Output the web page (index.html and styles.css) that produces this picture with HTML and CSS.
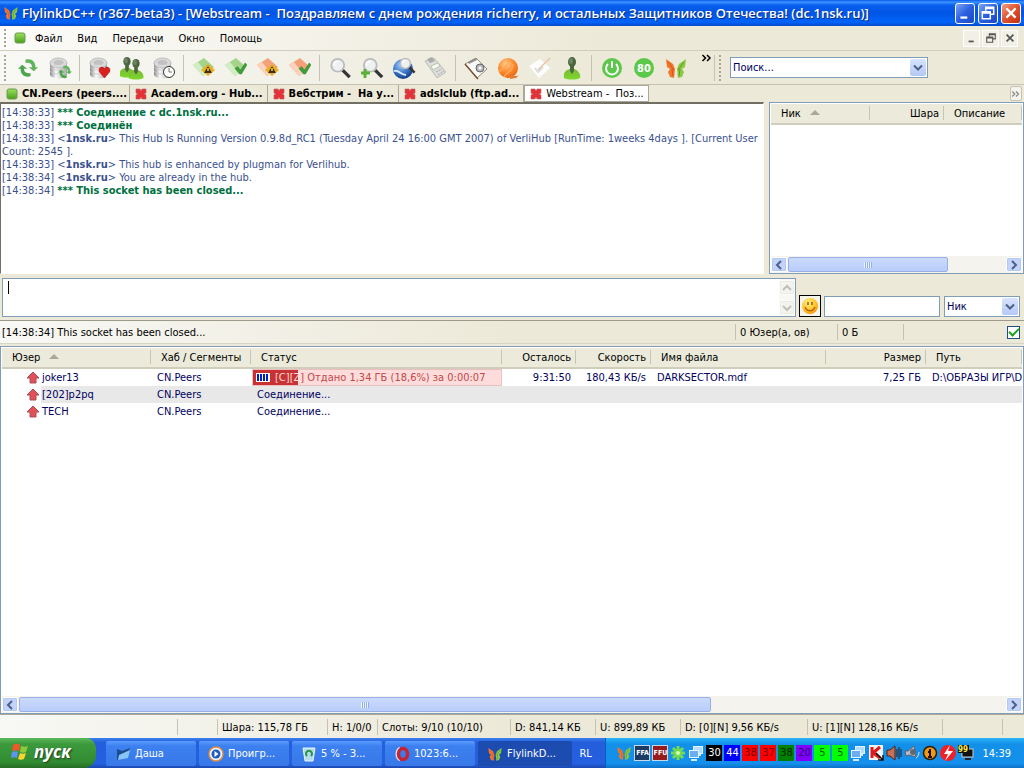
FILE: index.html
```
<!DOCTYPE html>
<html lang="ru">
<head>
<meta charset="UTF-8">
<meta name="viewport" content="width=device-width, initial-scale=1.0">
<title>FlylinkDC++</title>
<link rel="stylesheet" href="styles.css">
</head>
<body>
<!-- icon sprite -->
<svg class="sprite" aria-hidden="true">
    <defs>
        <linearGradient id="gGreen" x1="0" y1="0" x2="0" y2="1"><stop offset="0" stop-color="#9be05a"/><stop offset="1" stop-color="#4a9e1e"/></linearGradient>
        <linearGradient id="gMetal" x1="0" y1="0" x2="1" y2="0"><stop offset="0" stop-color="#8a8a8a"/><stop offset=".35" stop-color="#fafafa"/><stop offset="1" stop-color="#a4a4a4"/></linearGradient>
        <linearGradient id="gLeaf" x1="0" y1="0" x2="0" y2="1"><stop offset="0" stop-color="#7cb83c"/><stop offset="1" stop-color="#7cd828"/></linearGradient>
        <radialGradient id="gBlue" cx=".4" cy=".3" r=".8"><stop offset="0" stop-color="#a8d0f8"/><stop offset=".5" stop-color="#3a78c8"/><stop offset="1" stop-color="#0c2c70"/></radialGradient>
        <radialGradient id="gOrange" cx=".4" cy=".3" r=".8"><stop offset="0" stop-color="#ffd090"/><stop offset=".5" stop-color="#ff8a30"/><stop offset="1" stop-color="#e85c08"/></radialGradient>
        <radialGradient id="gSmile" cx=".4" cy=".3" r=".8"><stop offset="0" stop-color="#fff08a"/><stop offset=".6" stop-color="#ffc420"/><stop offset="1" stop-color="#f08a00"/></radialGradient>
        <symbol id="butterfly" viewBox="0 0 24 24">
            <path d="M11 13L9 8 2 3l1 8 3 2-2 3 2 5 4 1z" fill="#f2762c"/>
            <path d="M13 13l2-5 7-5-1 8-3 2 2 3-2 5-4 1z" fill="#8cc840"/>
            <path d="M4 6l6 8M8 13l1 7" stroke="#d4541c"/>
            <path d="M20 6l-6 8M16 13l-1 7" stroke="#5c9c28"/>
        </symbol>
        <symbol id="on" viewBox="0 0 12 12"><rect x="1" y="1" width="10" height="10" rx="2" fill="url(#gGreen)" stroke="#6a9a50"/></symbol>
        <symbol id="off" viewBox="0 0 12 12"><path d="M1 1h4l1 2 1-2h4v4L9 6l2 1v4H7L6 9l-1 2H1V7l2-1-2-1z" fill="#e43238" stroke="#b85a5c" stroke-width=".6"/></symbol>
        <symbol id="disk" viewBox="0 0 24 24">
            <path d="M2 7v12c2 4 15 5 17 0V7z" fill="url(#gMetal)"/>
            <path d="M2 11c2 4 15 4 17 0M2 15c2 4 15 4 17 0" fill="none" stroke="#c4c4c4" stroke-width=".8"/>
            <ellipse cx="10.500" cy="7" rx="8.500" ry="5" fill="#dadada" stroke="#b4b4b4" stroke-width=".8"/>
            <ellipse cx="10.500" cy="6.500" rx="5" ry="2.500" fill="#c2c2c2"/>
        </symbol>
        <symbol id="cycle" viewBox="0 0 24 24">
            <path d="M9 2c7-2 12 2 12 9h3l-5 5-6-5h4c0-4-3-6-8-5z" fill="#62b45c"/>
            <path d="M15 22c-7 2-12-2-12-9H0l5-5 6 5H7c0 4 3 6 8 5z" fill="#4ca44c"/>
        </symbol>
        <symbol id="heart" viewBox="0 0 12 12"><path d="M6 12L1 6C-1 2 4-1 6 3c2-4 7-1 5 3z" fill="#dc2020" stroke="#a81010" stroke-width=".5"/></symbol>
        <symbol id="check" viewBox="0 0 14 14"><path d="M1 7l3-2 3 4 5-8 2 2-6 10H6z" fill="#3fa03a" stroke="#2a742a" stroke-width=".5"/></symbol>
        <symbol id="warn" viewBox="0 0 14 12"><path d="M7 0l7 6-7 6-7-6z" fill="#e8b020"/><path d="M7 2l4 7H3z" fill="#403000"/><path d="M7 4v3" stroke="#ffd040" stroke-width="1.500"/></symbol>
        <symbol id="sheetGreen" viewBox="0 0 24 24"><path d="M1 9L12 2l10 9-11 9z" fill="#a4d48a"/><path d="M1 9l5-3 9 11-4 3z" fill="#d2ecc4"/></symbol>
        <symbol id="sheetRed" viewBox="0 0 24 24"><path d="M1 9L12 2l10 9-11 9z" fill="#f4a078"/><path d="M1 9l5-3 9 11-4 3z" fill="#fbd2bc"/></symbol>
        <symbol id="lens" viewBox="0 0 24 24">
            <path d="M14 14l8 8" stroke="#333" stroke-width="3.500"/>
            <circle cx="9" cy="9" r="7" fill="#eef0f2" stroke="#bcbcbc" stroke-width="2"/>
            <path d="M5 9c0-3 2-4 4-4" fill="none" stroke="#fff" stroke-width="2"/>
        </symbol>
        <symbol id="person" viewBox="0 0 24 24">
            <path d="M4 22c-1-6 2-8 6-9h4c4 1 7 5 6 9-4 2-12 2-16 0z" fill="url(#gLeaf)"/>
            <path d="M10 10h4v5l-2 3-2-3z" fill="#4a6a3a"/>
            <ellipse cx="12" cy="6" rx="4" ry="5" fill="#4c6440"/>
            <ellipse cx="11" cy="5" rx="2" ry="3" fill="#6c8460"/>
        </symbol>
        <symbol id="flag" viewBox="0 0 20 18">
            <path d="M3 2c3-2 5-1 7 0L9 8C7 7 5 7 2 8z" fill="#f0582c"/><path d="M11 3c3 1 5 1 7 0l-2 6c-2 1-4 1-6 0z" fill="#8ccc3c"/>
            <path d="M2 9c2-1 5-1 6 0l-1 6c-2-1-4-1-6 0z" fill="#5c94f0"/><path d="M10 10c2 1 4 1 6 0l-2 6c-2 1-4 1-6 0z" fill="#fcd430"/>
        </symbol>
        <symbol id="arrowUp" viewBox="0 0 14 14"><path d="M7 1l6 6h-3v5H4V7H1z" fill="#e25058" stroke="#a85058"/></symbol>
        <symbol id="down" viewBox="0 0 10 10"><path d="M1 3l4 4 4-4" fill="none" stroke="#4d6185" stroke-width="2"/></symbol>
        <symbol id="up" viewBox="0 0 10 10"><path d="M1 7l4-4 4 4" fill="none" stroke="#4d6185" stroke-width="2"/></symbol>
        <symbol id="left" viewBox="0 0 10 10"><path d="M7 1L3 5l4 4" fill="none" stroke="#4d6185" stroke-width="2"/></symbol>
        <symbol id="right" viewBox="0 0 10 10"><path d="M3 1l4 4-4 4" fill="none" stroke="#4d6185" stroke-width="2"/></symbol>
        <symbol id="more" viewBox="0 0 8 8"><path d="M1 2l2 2-2 2M4 2l2 2-2 2" fill="none" stroke="currentColor"/></symbol>
        <symbol id="min" viewBox="0 0 14 14"><path d="M3 10h6v2H3z" fill="currentColor"/></symbol>
        <symbol id="restore" viewBox="0 0 14 14"><path d="M5 5V2h7v6h-3M5 3h7M2 6h7v6H2zM2 7h7" fill="none" stroke="currentColor" stroke-width="1.300"/></symbol>
        <symbol id="cross" viewBox="0 0 14 14"><path d="M3 3l8 8M11 3l-8 8" stroke="currentColor" stroke-width="2"/></symbol>
        <symbol id="net" viewBox="0 0 16 16"><rect x="5.500" y="1.500" width="9" height="7" fill="#b4dcfc" stroke="#e4f4ff"/><path d="M8 10h5" stroke="#d0e8fc" stroke-width="2"/><rect x="1.500" y="5.500" width="9" height="7" fill="#6cacf0" stroke="#e4f4ff"/><path d="M3 15h6" stroke="#d0e8fc" stroke-width="2"/></symbol>
    </defs>
</svg>

<header class="titlebar">
    <svg class="icon16"><use href="#butterfly"/></svg>
    <h1>FlylinkDC++ (r367-beta3) - [Webstream -&nbsp; Поздравляем с днем рождения richerry, и остальных Защитников Отечества! (dc.1nsk.ru)]</h1>
    <button class="win-btn" aria-label="Свернуть"><svg><use href="#min"/></svg></button>
    <button class="win-btn" aria-label="Восстановить"><svg><use href="#restore"/></svg></button>
    <button class="win-btn win-close" aria-label="Закрыть"><svg><use href="#cross"/></svg></button>
</header>

<nav class="menubar">
    <span class="grip"></span>
    <svg class="icon12"><use href="#on"/></svg>
    <button class="menu">Файл</button>
    <button class="menu">Вид</button>
    <button class="menu">Передачи</button>
    <button class="menu">Окно</button>
    <button class="menu">Помощь</button>
    <span class="fill"></span>
    <button class="mdi-btn" aria-label="Свернуть окно"><svg><use href="#min"/></svg></button>
    <button class="mdi-btn" aria-label="Восстановить окно"><svg><use href="#restore"/></svg></button>
    <button class="mdi-btn" aria-label="Закрыть окно"><svg><use href="#cross"/></svg></button>
</nav>

<div class="toolbar">
    <span class="grip"></span>
    <button class="tool" aria-label="Переподключить"><svg viewBox="0 0 24 24"><use href="#cycle" x="2" y="2" width="20" height="20"/></svg></button>
    <button class="tool" aria-label="Обновить хаб"><svg viewBox="0 0 24 24"><use href="#disk" width="24" height="24"/><use href="#cycle" x="10" y="9" width="14" height="14"/></svg></button>
    <span class="sep"></span>
    <button class="tool" aria-label="Избранные хабы"><svg viewBox="0 0 24 24"><use href="#disk" width="24" height="24"/><use href="#heart" x="10" y="10" width="13" height="12"/></svg></button>
    <button class="tool" aria-label="Избранные пользователи"><svg viewBox="0 0 24 24"><use href="#person" x="-4" y="-1" width="22" height="24"/><use href="#person" x="5" y="1" width="22" height="24"/></svg></button>
    <button class="tool" aria-label="Последние хабы"><svg viewBox="0 0 24 24"><use href="#disk" width="24" height="24"/><circle cx="17" cy="16" r="5.500" fill="#fff" stroke="#333"/><path d="M17 12v4h3" fill="none" stroke="#777"/></svg></button>
    <span class="sep"></span>
    <button class="tool" aria-label="Очередь"><svg viewBox="0 0 24 24"><use href="#sheetGreen" width="24" height="24"/><use href="#warn" x="9" y="8" width="14" height="12"/></svg></button>
    <button class="tool" aria-label="Скачанные"><svg viewBox="0 0 24 24"><use href="#sheetGreen" width="24" height="24"/><use href="#check" x="10" y="6" width="13" height="13"/></svg></button>
    <button class="tool" aria-label="Очередь отдачи"><svg viewBox="0 0 24 24"><use href="#sheetRed" width="24" height="24"/><use href="#warn" x="9" y="8" width="14" height="12"/></svg></button>
    <button class="tool" aria-label="Отданные"><svg viewBox="0 0 24 24"><use href="#sheetRed" width="24" height="24"/><use href="#check" x="10" y="6" width="13" height="13"/></svg></button>
    <span class="sep"></span>
    <button class="tool" aria-label="Поиск"><svg viewBox="0 0 24 24"><use href="#lens" x="1" y="1" width="23" height="22"/></svg></button>
    <button class="tool" aria-label="Автопоиск"><svg viewBox="0 0 24 24"><use href="#lens" x="2" y="1" width="22" height="22"/><path d="M5 13v9M1 17h9" stroke="#58b038" stroke-width="3"/></svg></button>
    <button class="tool" aria-label="Шпион поиска"><svg viewBox="0 0 24 24"><circle cx="11" cy="13" r="10" fill="url(#gBlue)"/><path d="M2 15c5-2 6 4 12 4" fill="none" stroke="#d8e8ff" stroke-width="2"/><use href="#lens" x="7" y="1" width="17" height="17"/></svg></button>
    <button class="tool" aria-label="Список файлов"><svg viewBox="0 0 24 24"><path d="M1 5l9-3 12 14-9 6z" fill="#dcdcda" stroke="#bcbcba"/><path d="M3 3l5-2 3 4-5 2z" fill="#aaa"/><path d="M7 10l7-3 2 3-7 4z" fill="#f8f8f8" stroke="#b4c8a4"/><path d="M12 16l6-3M14 19l6-4" stroke="#aaa" stroke-dasharray="2 1"/></svg></button>
    <span class="sep"></span>
    <button class="tool" aria-label="Настройки"><svg viewBox="0 0 24 24"><path d="M1 8l11-6 11 11-10 9z" fill="#fafafa" stroke="#9a8a78"/><path d="M1 8l12 14 1 1" stroke="#7a5030" stroke-width="1.500"/><circle cx="16" cy="12" r="4" fill="#b8b8bc" stroke="#666"/><circle cx="16" cy="12" r="1.500" fill="#fff"/><path d="M4 6l8-4 1 2-8 4z" fill="#909090"/></svg></button>
    <button class="tool" aria-label="Блокнот"><svg viewBox="0 0 24 24"><circle cx="12" cy="12" r="10" fill="url(#gOrange)"/><path d="M3 16c4-6 9-4 9-12M8 21c3-6 9-4 9-13" fill="none" stroke="#ffa858" stroke-width="1.500"/><path d="M14 18c4 3 8 2 9 1l-3 3-6 1z" fill="#e87830"/></svg></button>
    <button class="tool" aria-label="Заметки"><svg viewBox="0 0 24 24"><path d="M1 10L12 3l10 9-11 10z" fill="#fdfdfd"/><path d="M7 12l3 4 5-5" fill="none" stroke="#ddd" stroke-width="2"/><path d="M22 2L10 14" stroke="#e8c4a0" stroke-width="1.500"/></svg></button>
    <button class="tool" aria-label="Отошёл"><svg viewBox="0 0 24 24"><use href="#person" x="0" y="0" width="24" height="24"/></svg></button>
    <span class="sep"></span>
    <button class="tool" aria-label="Выключение"><svg viewBox="0 0 24 24"><circle cx="12" cy="12" r="10" fill="#5cc84a"/><path d="M8 8a6 6 0 1 0 8 0M12 5v7" fill="none" stroke="#fff" stroke-width="2"/></svg></button>
    <button class="tool" aria-label="Лимит 80"><svg viewBox="0 0 24 24"><circle cx="12" cy="12" r="10" fill="#5cc84a"/><text x="12" y="16" text-anchor="middle" class="limit">80</text></svg></button>
    <button class="tool" aria-label="Обновление"><svg viewBox="0 0 24 24"><use href="#butterfly" width="24" height="24"/></svg></button>
    <button class="tool-more" aria-label="Ещё"><svg><use href="#more"/></svg></button>
    <span class="grip band"></span>
    <span class="combo search">
        <select aria-label="Поиск"><option>Поиск...</option></select>
        <svg><use href="#down"/></svg>
    </span>
</div>

<div class="tabs">
    <button class="tab"><svg class="icon12"><use href="#on"/></svg>CN.Peers (peers....</button>
    <button class="tab"><svg class="icon12"><use href="#off"/></svg>Academ.org - Hub...</button>
    <button class="tab"><svg class="icon12"><use href="#off"/></svg>Вебстрим -&nbsp; На у...</button>
    <button class="tab"><svg class="icon12"><use href="#off"/></svg>adslclub (ftp.ad...</button>
    <button class="tab active"><svg class="icon12"><use href="#off"/></svg>Webstream -&nbsp; Поз...</button>
    <span class="fill"></span>
    <button class="tabs-more" aria-label="Все вкладки"><svg><use href="#more"/></svg></button>
</div>

<main>
    <section class="hub">
        <div class="chat">
            <p>[14:38:33] <b class="sys">*** Соединение с dc.1nsk.ru...</b></p>
            <p>[14:38:33] <b class="sys">*** Соединён</b></p>
            <p>[14:38:33] &lt;<b>1nsk.ru</b>&gt; This Hub Is Running Version 0.9.8d_RC1 (Tuesday April 24 16:00 GMT 2007) of VerliHub [RunTime: 1weeks 4days ]. [Current User Count: 2545 ].</p>
            <p>[14:38:33] &lt;<b>1nsk.ru</b>&gt; This hub is enhanced by plugman for Verlihub.</p>
            <p>[14:38:34] &lt;<b>1nsk.ru</b>&gt; You are already in the hub.</p>
            <p>[14:38:34] <b class="sys">*** This socket has been closed...</b></p>
        </div>
        <div class="users">
            <table>
                <colgroup><col class="u-nick"><col class="u-share"><col></colgroup>
                <thead><tr><th>Ник <i class="sort"></i></th><th class="num">Шара</th><th>Описание</th></tr></thead>
            </table>
            <div class="hscroll">
                <button aria-label="Влево"><svg><use href="#left"/></svg></button>
                <span class="track"><span class="thumb"><i></i></span></span>
                <button aria-label="Вправо"><svg><use href="#right"/></svg></button>
            </div>
        </div>
    </section>

    <div class="compose">
        <div class="message">
            <textarea aria-label="Сообщение"></textarea>
            <span class="caret"></span>
            <span class="vscroll">
                <button disabled aria-label="Вверх"><svg><use href="#up"/></svg></button>
                <button disabled aria-label="Вниз"><svg><use href="#down"/></svg></button>
            </span>
        </div>
        <button class="smile" aria-label="Смайлы"><svg viewBox="0 0 18 18"><circle cx="9" cy="9" r="8" fill="url(#gSmile)"/><path d="M7 5v3M11 5v3" stroke="#a05010" stroke-width="1.500"/><path d="M4 10c2 5 8 5 10 0" fill="none" stroke="#c06010" stroke-width="1.500"/></svg></button>
        <input type="text" class="filter" aria-label="Фильтр">
        <span class="combo by">
            <select aria-label="Поле фильтра"><option>Ник</option></select>
            <svg><use href="#down"/></svg>
        </span>
    </div>

    <div class="hub-status">
        <span class="fill">[14:38:34] This socket has been closed...</span>
        <span class="cell w-users">0 Юзер(а, ов)</span>
        <span class="cell w-bytes">0 Б</span>
        <span class="cell w-empty"></span>
        <label class="show"><input type="checkbox" checked aria-label="Показать список"></label>
    </div>

    <section class="transfers">
        <table>
            <colgroup>
                <col class="t-user"><col class="t-hub"><col class="t-status"><col class="t-left">
                <col class="t-speed"><col class="t-file"><col class="t-size"><col>
            </colgroup>
            <thead>
                <tr><th>Юзер <i class="sort"></i></th><th>Хаб / Сегменты</th><th>Статус</th><th class="num">Осталось</th><th class="num">Скорость</th><th>Имя файла</th><th class="num">Размер</th><th>Путь</th></tr>
            </thead>
            <tbody>
                <tr>
                    <td class="user"><svg><use href="#arrowUp"/></svg><span>joker13</span></td>
                    <td>CN.Peers</td>
                    <td class="bar-cell"><div class="bar"><span class="chunks"></span><span class="done">[C][Z</span>] Отдано 1,34 ГБ (18,6%) за 0:00:07</div></td>
                    <td class="num">9:31:50</td><td class="num">180,43 КБ/s</td><td>DARKSECTOR.mdf</td><td class="num">7,25 ГБ</td><td>D:\ОБРАЗЫ ИГР\D</td>
                </tr>
                <tr>
                    <td class="user"><svg><use href="#arrowUp"/></svg><span>[202]p2pq</span></td>
                    <td>CN.Peers</td><td>Соединение...</td><td></td><td></td><td></td><td></td><td></td>
                </tr>
                <tr>
                    <td class="user"><svg><use href="#arrowUp"/></svg><span>TECH</span></td>
                    <td>CN.Peers</td><td>Соединение...</td><td></td><td></td><td></td><td></td><td></td>
                </tr>
            </tbody>
        </table>
        <div class="hscroll">
            <button aria-label="Влево"><svg><use href="#left"/></svg></button>
            <span class="track"><span class="thumb"><i></i></span></span>
            <button aria-label="Вправо"><svg><use href="#right"/></svg></button>
        </div>
    </section>
</main>

<footer class="app-status">
    <span class="fill"></span>
    <span class="cell w40"></span>
    <span class="cell w110">Шара: 115,78 ГБ</span>
    <span class="cell w50">H: 1/0/0</span>
    <span class="cell w133">Слоты: 9/10 (10/10)</span>
    <span class="cell w85">D: 841,14 КБ</span>
    <span class="cell w85">U: 899,89 КБ</span>
    <span class="cell w127">D: [0][N] 9,56 КБ/s</span>
    <span class="cell w135">U: [1][N] 128,16 КБ/s</span>
    <span class="cell w60"></span>
    <span class="cell w22"></span>
</footer>

<div class="taskbar">
    <button class="start"><svg><use href="#flag"/></svg>пуск</button>
    <div class="tasks">
        <button class="task"><svg viewBox="0 0 16 16"><path d="M2 3l5 2 8-3-3 9-10 3z" fill="#1c4c90"/><path d="M4 9l11-5-2 8-10 2z" fill="#88c4f4"/></svg>Даша</button>
        <button class="task"><svg viewBox="0 0 16 16"><circle cx="8" cy="8" r="7" fill="#eef4fc" stroke="#e09040" stroke-width="1.500"/><circle cx="8" cy="8" r="4.500" fill="#1c5cc0"/><path d="M6.500 5l4 3-4 3z" fill="#fff"/></svg>Проигр...</button>
        <button class="task"><svg viewBox="0 0 16 16"><path d="M2 2h12l-2 13H4z" fill="#b4dcec" stroke="#e4f4fc"/><path d="M6 10a3 3 0 1 1 4 0" fill="none" stroke="#2c9444" stroke-width="2"/></svg>5 % - З...</button>
        <button class="task"><svg viewBox="0 0 16 16"><path d="M6 1C0 2 0 14 6 15z" fill="#dce4f4"/><ellipse cx="9" cy="8" rx="4.500" ry="5.500" fill="none" stroke="#c82430" stroke-width="3.500"/></svg>1023:6...</button>
        <button class="task active"><svg><use href="#butterfly"/></svg>FlylinkD...</button>
    </div>
    <span class="lang">RL</span>
    <div class="tray">
        <svg><use href="#butterfly"/></svg>
        <span class="badge ffa">FFA</span>
        <span class="badge ffu">FFU</span>
        <svg viewBox="0 0 16 16"><path d="M8 1v14M1 8h14M3 3l10 10M13 3L3 13" stroke="#70dc50" stroke-width="3"/><circle cx="8" cy="8" r="2" fill="#e0ffb0"/></svg>
        <svg><use href="#net"/></svg>
        <span class="temp black">30</span>
        <span class="temp blue">44</span>
        <span class="temp red">38</span>
        <span class="temp red">37</span>
        <span class="temp green">38</span>
        <span class="temp violet">20</span>
        <span class="temp lime">5</span>
        <span class="temp lime">5</span>
        <svg><use href="#net"/></svg>
        <svg viewBox="0 0 16 16"><rect width="14" height="15" x="1" fill="#f4f4f4"/><path d="M4 2v11M12 2L5 8l7 5" fill="none" stroke="#e01818" stroke-width="3"/><path d="M8 8l7 7M15 10v5h-5" fill="none" stroke="#111" stroke-width="1.500"/></svg>
        <svg viewBox="0 0 16 16"><path d="M1 5h3l5-4v14l-5-4H1z" fill="#c87050" stroke="#581c10"/><path d="M11 4v8M13 2v12M15 4v8" stroke="#281c1c"/></svg>
        <svg viewBox="0 0 16 16"><path d="M1 6h3l6-5 2 11-7-2-3 1z" fill="#b8bcc4" stroke="#596270"/><circle cx="9" cy="7" r="3" fill="#606874"/><path d="M12 13c2-1 3-4 3-6" fill="none" stroke="#d8e8f8"/></svg>
        <svg viewBox="0 0 16 16"><circle cx="8" cy="8" r="6.500" fill="#f09818" stroke="#301c04" stroke-width="1.500"/><path d="M8 4v2M6 7h2v5M6 12h4" fill="none" stroke="#201000" stroke-width="2"/></svg>
        <svg viewBox="0 0 16 16"><circle cx="8" cy="8" r="8" fill="#f02028"/><path d="M10 0L4 9h4l-3 7 8-10H8z" fill="#fff"/></svg>
        <svg viewBox="0 0 16 16"><rect x="4" y="4" width="11" height="8" fill="#111" stroke="#ccc"/><path d="M7 14h6" stroke="#222" stroke-width="2"/><rect width="11" height="8" fill="#111"/><text x="0" y="7" class="tiny">99</text></svg>
        <time>14:39</time>
    </div>
</div>
</body>
</html>
```

FILE: styles.css
```
* {
    box-sizing: border-box;
}
body {
    display: flex;
    flex-direction: column;
    height: 100vh;
    margin: 0;
    overflow: hidden;
    background: #ece9d8;
    color: #000;
    font: 11px/13px "DejaVu Sans Condensed", "DejaVu Sans", Tahoma, sans-serif;
    white-space: nowrap;
}
button, input, select, textarea {
    font: inherit;
    color: inherit;
    margin: 0;
    padding: 0;
}
button {
    border: none;
    background: none;
    white-space: nowrap;
}
svg {
    display: block;
    flex: none;
}
p {
    margin: 0;
}
.sprite {
    position: absolute;
    width: 0;
    height: 0;
}
.fill {
    flex: 1;
}
.icon16 {
    width: 16px;
    height: 16px;
}
.icon12 {
    width: 12px;
    height: 12px;
}

/* title bar */
.titlebar {
    display: flex;
    align-items: center;
    gap: 3px;
    height: 26px;
    padding: 0 3px;
    background: linear-gradient(#0a5be8, #3a94ff 8%, #0a5fee 20%, #0055e5 50%, #0064fa 85%, #0148c8);
}
.titlebar h1 {
    flex: 1;
    margin: 0;
    overflow: hidden;
    color: #fff;
    font: 600 13px/20px "Open Sans", "Noto Sans", sans-serif;
    text-shadow: 1px 1px #0a2a80;
}
.win-btn {
    display: grid;
    place-items: center;
    width: 20px;
    height: 21px;
    border: 1px solid #fff;
    border-radius: 3px;
    background: linear-gradient(135deg, #7ba4f4, #2a5fe0 50%, #1c48c0);
    color: #fff;
}
.win-btn svg {
    width: 16px;
    height: 16px;
}
.win-close {
    background: linear-gradient(135deg, #f0a080, #e0502c 50%, #c03010);
}

/* menu */
.menubar {
    display: flex;
    align-items: center;
    height: 24px;
    padding: 0 6px 0 4px;
    background: linear-gradient(90deg, #fbfbf9, #ece9d8 60%);
}
.grip {
    flex: none;
    width: 2px;
    height: 18px;
    margin-right: 8px;
    background: repeating-linear-gradient(#a8a595 0 2px, transparent 2px 4px);
}
.menu {
    padding: 0 7px 0 8px;
}
.menubar .icon12 {
    margin-right: 1px;
}
.mdi-btn {
    display: grid;
    place-items: center;
    width: 17px;
    height: 17px;
    margin-left: 2px;
    border: 1px solid #fff;
    background: #f2f0e6;
    color: #555;
}
.mdi-btn svg {
    width: 12px;
    height: 12px;
}

/* toolbar */
.toolbar {
    display: flex;
    align-items: center;
    height: 35px;
    padding-left: 4px;
    border-top: 1px solid #d0cdbd;
    border-bottom: 1px solid #c5c2b2;
    background: linear-gradient(90deg, #f8f8f5, #ece9d8 60%);
}
.toolbar .grip {
    height: 26px;
    margin-right: 6px;
}
.tool {
    display: grid;
    flex: none;
    place-items: center;
    width: 32px;
    height: 30px;
}
.tool svg {
    width: 24px;
    height: 24px;
}
.limit {
    fill: #fff;
    font-size: 11px;
    font-weight: bold;
}
.sep {
    flex: none;
    width: 1px;
    height: 26px;
    margin: 0 4px 0 3px;
    background: #c5c2b2;
}
.tool-more {
    align-self: flex-start;
    height: 12px;
    margin: 1px 6px 0 9px;
}
.tool-more svg {
    width: 12px;
    height: 12px;
}
.toolbar .band {
    box-shadow: -4px 0 #ece9d8, -5px 0 #c5c2b2;
    margin-right: 9px;
}

.combo {
    position: relative;
    display: block;
    height: 21px;
}
.combo select {
    width: 100%;
    height: 100%;
    padding: 0 20px 0 2px;
    border: 1px solid #7f9db9;
    border-radius: 0;
    background: #fff;
    color: #000060;
    appearance: none;
}
.combo svg {
    position: absolute;
    top: 2px;
    right: 2px;
    width: 16px;
    height: 17px;
    padding: 3px;
    border-radius: 2px;
    background: linear-gradient(#d8e4ff, #b4c8f6);
    pointer-events: none;
}
.search {
    width: 198px;
}

/* hub tabs */
.tabs {
    display: flex;
    align-items: center;
    height: 17px;
    padding-right: 2px;
}
.tab {
    display: flex;
    align-items: center;
    gap: 4px;
    height: 17px;
    padding: 0 4px 0 5px;
    border-right: 1px solid #aca899;
    font-weight: bold;
}
.tab:first-child {
    padding: 0 2px 0 6px;
}
.tab.active {
    border: 1px solid #aca899;
    background: #fff;
    font-weight: normal;
}
.tabs-more {
    width: 12px;
    height: 15px;
    border: 1px solid #c5c2b2;
    border-radius: 2px;
    background: #f5f4ec;
    color: #888;
}
.tabs-more svg {
    width: 10px;
    height: 10px;
}

/* main panes */
main {
    display: flex;
    flex: 1;
    flex-direction: column;
    min-height: 0;
}
.hub {
    display: flex;
    flex: 173 1 0;
    gap: 5px;
    min-height: 0;
}
.chat {
    flex: 1;
    overflow: hidden;
    padding: 2px 0 0 1px;
    border: 1px solid #fff;
    border-top: 2px solid #716f64;
    border-left: 1px solid #716f64;
    background: #fff;
    color: #3a5090;
    white-space: normal;
}
.sys {
    color: #007040;
}
.users {
    display: flex;
    flex-direction: column;
    justify-content: space-between;
    width: 255px;
    border: 1px solid #7f9db9;
    background: #fff;
    padding: 1px 1px 0;
}

table {
    width: 100%;
    border-collapse: collapse;
    table-layout: fixed;
}
th {
    position: relative;
    height: 20px;
    padding: 0 5px 0 10px;
    overflow: hidden;
    border-bottom: 2px solid #d0cdbb;
    background: #ebeadb;
    font-weight: normal;
    text-align: left;
}
th::after {
    content: "";
    position: absolute;
    top: 2px;
    right: 0;
    width: 1px;
    height: 14px;
    background: #c7c5b2;
}
.sort {
    display: inline-block;
    margin: 0 0 2px 6px;
    border: 5px solid transparent;
    border-top: none;
    border-bottom-color: #aca899;
}
.num {
    text-align: right;
}
.u-nick { width: 99px; }
.u-share { width: 74px; }

.hscroll {
    display: flex;
    height: 17px;
    padding: 1px 0;
    background: #f4f3ee;
}
.hscroll button, .vscroll button {
    display: grid;
    place-items: center;
    width: 16px;
    height: 15px;
    border: 1px solid #fff;
    border-radius: 2px;
    background: #c3d3fb;
    box-shadow: inset 0 0 0 1px #b4c8f6;
}
.hscroll svg {
    width: 10px;
    height: 10px;
}
.track {
    flex: 1;
}
.thumb {
    display: grid;
    place-items: center;
    width: 73%;
    height: 15px;
    margin-left: 1px;
    border: 1px solid #98b0e8;
    border-radius: 2px;
    background: linear-gradient(#cbdafc, #b9cdfa);
}
.transfers .thumb {
    width: 70%;
}
.thumb i {
    width: 8px;
    height: 6px;
    background: repeating-linear-gradient(90deg, #eef4fe 0 1px, #8cb0f8 1px 2px);
}

/* message input */
.compose {
    display: flex;
    flex: none;
    align-items: flex-end;
    gap: 3px;
    padding: 4px 4px 3px 2px;
    border-bottom: 1px solid #9d9a8b;
}
.message {
    position: relative;
    display: flex;
    flex: 1;
    height: 39px;
    border: 1px solid #7f9db9;
    background: #fff;
}
.message textarea {
    flex: 1;
    border: none;
    outline: none;
    resize: none;
    background: none;
}
.caret {
    position: absolute;
    top: 2px;
    left: 5px;
    width: 1px;
    height: 13px;
    background: #000;
}
.vscroll {
    display: flex;
    flex-direction: column;
    justify-content: space-between;
    width: 16px;
    padding: 1px 0;
    background: #f9f8f4;
}
.vscroll button {
    background: #f1f0ea;
    box-shadow: inset 0 0 0 1px #e4e2d8;
    opacity: .6;
}
.vscroll svg {
    width: 10px;
    height: 10px;
    filter: grayscale(1);
    opacity: .6;
}
.smile {
    display: grid;
    place-items: center;
    width: 22px;
    height: 22px;
    border: 1px solid #000;
    background: #f5f4ec;
}
.smile svg {
    width: 18px;
    height: 18px;
}
.filter {
    width: 116px;
    height: 21px;
    border: 1px solid #7f9db9;
}
.by {
    width: 76px;
    margin-left: 1px;
}

/* status bars */
.hub-status, .app-status {
    display: flex;
    flex: none;
    align-items: center;
    height: 23px;
    padding-left: 2px;
    background: linear-gradient(90deg, #f8f8f5, #ece9d8 50%);
}
.hub-status {
    border-bottom: 1px solid #d8d5c5;
}
.cell {
    height: 16px;
    padding: 2px 0 0 4px;
    border-left: 1px solid #c5c2b2;
}
.w-users { width: 102px; }
.w-bytes { width: 66px; }
.w-empty { width: 100px; }
.show {
    display: grid;
    place-items: center;
    width: 21px;
}
.show input {
    display: grid;
    place-items: center;
    width: 13px;
    height: 13px;
    border: 1px solid #1c5180;
    background: #fff;
    appearance: none;
}
.show input:checked::after {
    content: "";
    width: 8px;
    height: 4px;
    margin-bottom: 3px;
    border: solid #21a121;
    border-width: 0 0 2px 2px;
    transform: rotate(-45deg);
}

/* transfers */
.transfers {
    display: flex;
    flex: 367 1 0;
    flex-direction: column;
    justify-content: space-between;
    min-height: 0;
    margin-top: 2px;
    padding: 1px 1px 0;
    border: 1px solid #7f9db9;
    background: #fff;
}
.t-user { width: 149px; }
.t-hub, .t-size { width: 100px; }
.t-status { width: 251px; }
.t-left { width: 74px; }
.t-speed { width: 75px; }
.t-file { width: 175px; }
td {
    height: 17px;
    padding: 0 5px 0 6px;
    overflow: hidden;
    color: #000060;
}
td:last-child {
    padding-right: 0;
}
tbody tr:nth-child(even) td {
    background: #e8e8e8;
}
tbody tr:nth-child(even) .user {
    background: linear-gradient(90deg, #fff 39px, #e8e8e8 39px);
}
.user svg {
    float: left;
    width: 14px;
    height: 14px;
    margin: 0 2px 0 18px;
}
td.bar-cell {
    padding: 0 0 0 1px;
}
.bar {
    display: flex;
    align-items: center;
    height: 17px;
    border: 1px solid #ecc0c0;
    background: linear-gradient(90deg, #c83232 45px, #ffdcdc 45px);
    color: #c04848;
}
.chunks {
    width: 14px;
    height: 9px;
    margin: 0 5px 0 3px;
    border: 1px solid #fff;
    background: repeating-linear-gradient(90deg, #0020c0 0 2px, #fff 2px 3px);
}
.done {
    color: #ffdcdc;
}

.app-status {
    height: 24px;
    border-top: 1px solid #aca899;
}
.w22 { width: 22px; }
.w40 { width: 40px; }
.w50 { width: 50px; }
.w60 { width: 60px; }
.w85 { width: 85px; }
.w110 { width: 110px; }
.w127 { width: 127px; }
.w133 { width: 133px; }
.w135 { width: 135px; }

/* taskbar */
.taskbar {
    display: flex;
    align-items: stretch;
    height: 30px;
    background: linear-gradient(#3a80f0, #245edb 15%, #2560e0 85%, #1c48b0);
    color: #fff;
}
.start {
    display: flex;
    align-items: center;
    gap: 4px;
    width: 96px;
    padding: 0 0 2px 10px;
    border-radius: 0 10px 12px 0;
    background: linear-gradient(#5cb85c, #3c9a3c 20%, #328c32 80%, #246c24);
    font: italic bold 17px/20px "Open Sans", sans-serif;
    text-shadow: 1px 1px 2px #1c3c1c;
}
.start svg {
    width: 20px;
    height: 20px;
}
.tasks {
    display: flex;
    flex: 1;
    gap: 3px;
    padding: 3px 0 2px 10px;
}
.task {
    display: flex;
    flex: 0 1 90px;
    align-items: center;
    gap: 4px;
    padding-left: 9px;
    border-radius: 2px;
    background: linear-gradient(#5c9cff, #3c80f0 20%, #3878e8);
}
.task svg, .tray svg {
    width: 16px;
    height: 16px;
}
.task.active {
    flex-basis: 94px;
    background: #1c4cb0;
}
.lang {
    align-self: center;
    width: 26px;
}
.tray {
    display: flex;
    align-items: center;
    gap: 2px;
    padding: 0 13px 0 10px;
    border-left: 1px solid #0c5cb8;
    background: linear-gradient(#28b4f8, #1290e8 20%, #1490ec 85%, #0c70c8);
}
.badge, .temp {
    width: 16px;
    height: 16px;
    line-height: 16px;
    text-align: center;
}
.badge {
    border: 1px solid #c8d8e8;
    font-size: 7px;
    font-weight: bold;
    line-height: 14px;
}
.ffa { background: #1c3c64; }
.ffu { background: #981c1c; }
.black { background: #000; }
.blue { background: #0000ff; }
.red { background: #ff0000; color: #780000; }
.green { background: #008000; color: #002800; }
.violet { background: #8000ff; color: #300070; }
.lime { background: #00ff00; color: #006000; }
.tiny {
    fill: #ffe840;
    font-size: 8px;
    font-weight: bold;
}
.tray time {
    margin-left: 6px;
}
```
